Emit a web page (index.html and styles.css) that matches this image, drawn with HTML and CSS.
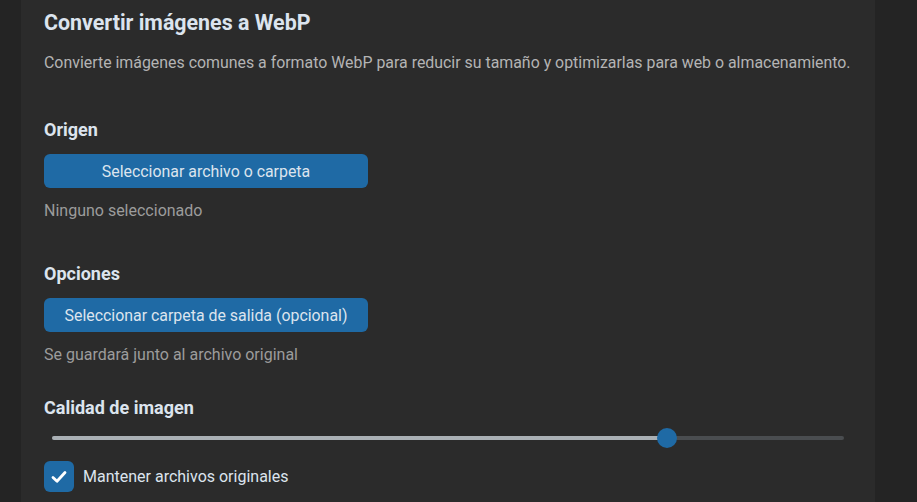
FILE: index.html
```html
<!DOCTYPE html>
<html lang="es">
<head>
  <meta charset="UTF-8" />
  <meta name="viewport" content="width=device-width, initial-scale=1.0" />
  <title>Convertir imágenes a WebP</title>
  <link rel="stylesheet" href="styles.css">
</head>
<body>
  <div class="card">
    <h1>Convertir imágenes a WebP</h1>
    <p class="desc">Convierte imágenes comunes a formato WebP para reducir su tamaño y optimizarlas para web o almacenamiento.</p>

    <h2 class="origin">Origen</h2>
    <button class="btn">Seleccionar archivo o carpeta</button>
    <p class="hint">Ninguno seleccionado</p>

    <h2 class="options">Opciones</h2>
    <button class="btn">Seleccionar carpeta de salida (opcional)</button>
    <p class="hint">Se guardará junto al archivo original</p>

    <h2 class="quality">Calidad de imagen</h2>
    <div class="slider">
      <div class="track">
        <div class="fill" style="width: 615px"></div>
        <div class="knob" style="left: 615px"></div>
      </div>
    </div>

    <label class="check">
      <span class="box">
        <svg width="20" height="20" viewBox="0 0 20 20"><path d="M4 10.5 L8 14.3 L16 5.5" fill="none" stroke="#fff" stroke-width="2.8" stroke-linecap="round" stroke-linejoin="round"/></svg>
      </span>
      Mantener archivos originales
    </label>
  </div>
</body>
</html>
```

FILE: styles.css
```css
body {
  margin: 0;
  background: #242424;
  font-family: Roboto, "Noto Sans", sans-serif;
  color: #dce4ee;
  height: 502px;
  overflow: hidden;
}

.card {
  margin-left: 21px;
  width: 854px;
  height: 520px;
  background: #2b2b2b;
  border-radius: 0 0 6px 6px;
  padding: 11px 23px 0;
  box-sizing: border-box;
  display: flex;
  flex-direction: column;
  align-items: flex-start;
}

h1 {
  margin: 0;
  font-size: 21.4px;
  line-height: 24px;
  font-weight: 700;
}

.desc {
  margin: 18px 0 0;
  font-size: 15.9px;
  line-height: 20px;
  color: #b4b4b4;
  white-space: nowrap;
}

h2 {
  margin: 0;
  font-size: 18px;
  line-height: 22px;
  font-weight: 700;
}

.origin { margin-top: 46px; }
.options { margin-top: 42px; }
.quality { margin-top: 32px; }

.btn {
  margin-top: 13px;
  width: 324px;
  height: 34px;
  border: none;
  border-radius: 6px;
  background: #1f6aa5;
  color: #dce4ee;
  font-family: inherit;
  font-size: 15.9px;
  padding: 0;
}

.hint {
  margin: 13px 0 0;
  font-size: 16px;
  line-height: 20px;
  color: #9c9c9c;
}

.slider {
  margin-top: 9px;
  height: 20px;
  width: 100%;
  display: flex;
  align-items: center;
}

.track {
  position: relative;
  margin-left: 8px;
  width: 792px;
  height: 4px;
  border-radius: 2px;
  background: #4a4d50;
}

.fill {
  height: 4px;
  border-radius: 2px;
  background: #aab0b5;
}

.knob {
  position: absolute;
  top: -8px;
  width: 20px;
  height: 20px;
  margin-left: -10px;
  border-radius: 50%;
  background: #1f6aa5;
}

.check {
  margin-top: 13px;
  display: flex;
  align-items: center;
  gap: 9px;
  font-size: 16px;
  line-height: 20px;
}

.check .box {
  width: 30px;
  height: 31px;
  border-radius: 6px;
  background: #1f6aa5;
  display: flex;
  align-items: center;
  justify-content: center;
}
```
